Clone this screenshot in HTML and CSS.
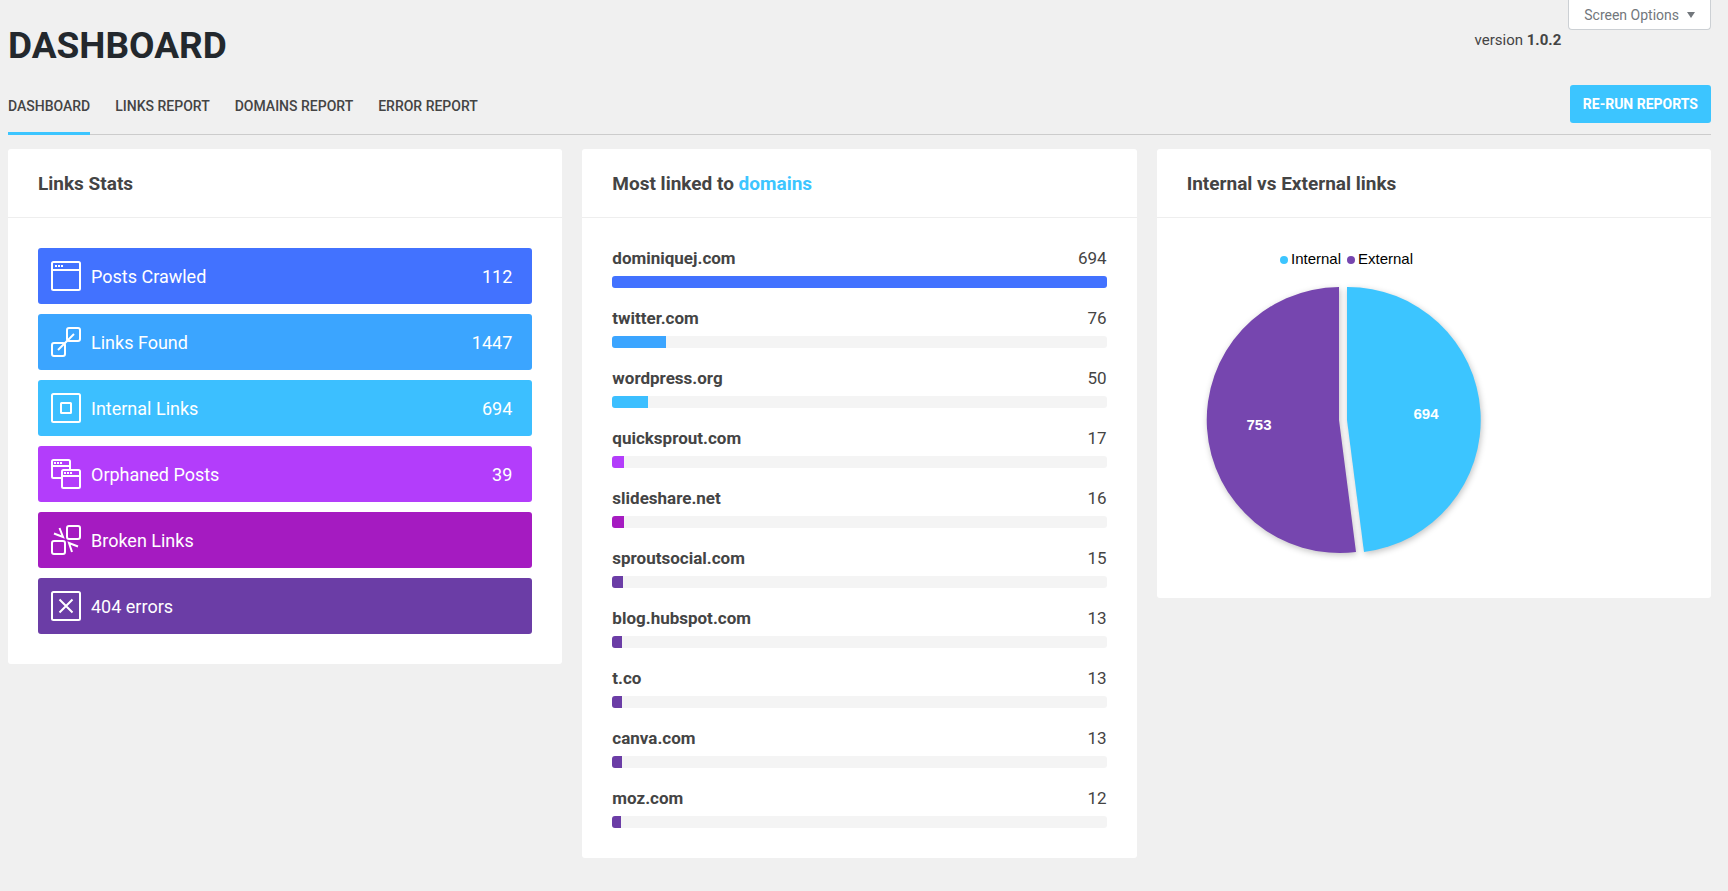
FILE: index.html
```html
<!DOCTYPE html>
<html lang="en">
<head>
<meta charset="utf-8">
<title>Dashboard</title>
<link rel="stylesheet" href="styles.css">
</head>
<body>
<header class="topbar">
  <h1 class="page-title">DASHBOARD</h1>
  <div class="topbar-side">
    <p class="version">version <strong>1.0.2</strong></p>
    <button class="screen-options" type="button">Screen Options
      <svg class="caret" viewBox="0 0 8 6" aria-hidden="true"><path d="M0 0h8L4 6z"/></svg>
    </button>
  </div>
</header>
<div class="navbar">
  <nav class="tabs">
    <a class="tab tab-active" href="#dashboard">DASHBOARD</a>
    <a class="tab" href="#links">LINKS REPORT</a>
    <a class="tab" href="#domains">DOMAINS REPORT</a>
    <a class="tab" href="#errors">ERROR REPORT</a>
  </nav>
  <button class="run-button" type="button">RE-RUN REPORTS</button>
</div>
<main class="cards">
  <section class="card">
    <h2 class="card-title">Links Stats</h2>
    <ul class="card-body stats">
      <li class="stat blue">
        <svg class="icon" viewBox="0 0 30 30" aria-hidden="true"><rect x="1" y="1" width="28" height="28" rx="1.5"/><path d="M1 9h28"/><path class="dots" d="M4 4h2v2H4zM7 4h2v2H7zM10 4h2v2h-2z"/></svg>
        <span class="stat-name">Posts Crawled</span><span class="stat-value">112</span>
      </li>
      <li class="stat sky">
        <svg class="icon" viewBox="0 0 30 30" aria-hidden="true"><rect x="1" y="16" width="13" height="13" rx="2"/><rect x="16" y="1" width="13" height="13" rx="2"/><path d="M7 23 23 7"/></svg>
        <span class="stat-name">Links Found</span><span class="stat-value">1447</span>
      </li>
      <li class="stat cyan">
        <svg class="icon" viewBox="0 0 30 30" aria-hidden="true"><rect x="1" y="1" width="28" height="28" rx="1.5"/><rect x="10" y="10" width="10" height="10" rx=".5"/></svg>
        <span class="stat-name">Internal Links</span><span class="stat-value">694</span>
      </li>
      <li class="stat orchid">
        <svg class="icon" viewBox="0 0 30 30" aria-hidden="true"><path d="M10 19H2.500Q1 19 1 17.500V2.500Q1 1 2.500 1H17.500Q19 1 19 2.500V10M1 7H19"/><rect x="11" y="11" width="18" height="18" rx="1.500"/><path d="M11 17h18"/><path class="dots" d="M3 3h2v2H3zM6 3h2v2H6zM9 3h2v2H9zM13 13h2v2h-2zM16 13h2v2h-2zM19 13h2v2h-2z"/></svg>
        <span class="stat-name">Orphaned Posts</span><span class="stat-value">39</span>
      </li>
      <li class="stat magenta">
        <svg class="icon" viewBox="0 0 30 30" aria-hidden="true"><rect x="1" y="16" width="13" height="13" rx="2"/><rect x="16" y="1" width="13" height="13" rx="2"/><path d="M8.500 3 12 12 3 8.500M21 27 18 18 27 21.500"/></svg>
        <span class="stat-name">Broken Links</span><span class="stat-value"></span>
      </li>
      <li class="stat violet">
        <svg class="icon" viewBox="0 0 30 30" aria-hidden="true"><rect x="1" y="1" width="28" height="28" rx="1.5"/><path d="M8.500 8.500l13 13M21.500 8.500l-13 13"/></svg>
        <span class="stat-name">404 errors</span><span class="stat-value"></span>
      </li>
    </ul>
  </section>

  <section class="card">
    <h2 class="card-title">Most linked to <span class="accent">domains</span></h2>
    <ul class="card-body domains">
      <li class="domain"><strong>dominiquej.com</strong><span>694</span><div class="track"><div class="fill blue" style="width:100%"></div></div></li>
      <li class="domain"><strong>twitter.com</strong><span>76</span><div class="track"><div class="fill sky" style="width:10.95%"></div></div></li>
      <li class="domain"><strong>wordpress.org</strong><span>50</span><div class="track"><div class="fill cyan" style="width:7.2%"></div></div></li>
      <li class="domain"><strong>quicksprout.com</strong><span>17</span><div class="track"><div class="fill orchid" style="width:2.45%"></div></div></li>
      <li class="domain"><strong>slideshare.net</strong><span>16</span><div class="track"><div class="fill magenta" style="width:2.31%"></div></div></li>
      <li class="domain"><strong>sproutsocial.com</strong><span>15</span><div class="track"><div class="fill violet" style="width:2.16%"></div></div></li>
      <li class="domain"><strong>blog.hubspot.com</strong><span>13</span><div class="track"><div class="fill violet" style="width:1.87%"></div></div></li>
      <li class="domain"><strong>t.co</strong><span>13</span><div class="track"><div class="fill violet" style="width:1.87%"></div></div></li>
      <li class="domain"><strong>canva.com</strong><span>13</span><div class="track"><div class="fill violet" style="width:1.87%"></div></div></li>
      <li class="domain"><strong>moz.com</strong><span>12</span><div class="track"><div class="fill violet" style="width:1.73%"></div></div></li>
    </ul>
  </section>

  <section class="card">
    <h2 class="card-title">Internal vs External links</h2>
    <div class="card-body">
      <svg class="pie" viewBox="0 0 320 320" role="img" aria-label="Internal 694, External 753">
        <circle class="internal" cx="97" cy="12" r="4"/>
        <text class="legend" x="104" y="16">Internal</text>
        <circle class="external" cx="164" cy="12" r="4"/>
        <text class="legend" x="171" y="16">External</text>
        <g class="slices">
          <path class="external" d="M152 172V39A133 133 0 1 0 169 304Z"/>
          <path class="internal" d="M160 172V39A133 133 0 0 1 177 304Z"/>
        </g>
        <text class="slice-label" x="239" y="171">694</text>
        <text class="slice-label" x="72" y="182">753</text>
      </svg>
    </div>
  </section>
</main>
</body>
</html>
```
FILE: styles.css
```css
* { box-sizing: border-box; }

body {
  margin: 0;
  padding: 0 17px 32px 8px;
  background: #f0f0f0;
  color: #444;
  font-family: Roboto, "Liberation Sans", sans-serif;
}

h1, h2, p, ul { margin: 0; padding: 0; }
ul { list-style: none; }
button { font-family: inherit; cursor: pointer; }

.topbar {
  display: flex;
  justify-content: space-between;
  padding-bottom: 15px;
}
.page-title {
  padding-top: 22px;
  color: #23282d;
  font-size: 37px;
  font-weight: 700;
  line-height: 48px;
}
.topbar-side {
  display: flex;
  align-items: flex-start;
  gap: 7px;
}
.version {
  padding-top: 30px;
  font-size: 15px;
  line-height: 20px;
}
.version strong { font-weight: 700; }
.screen-options {
  display: flex;
  align-items: center;
  gap: 8px;
  height: 30px;
  padding: 0 15px;
  border: 1px solid #ccd0d4;
  border-top: 0;
  border-radius: 0 0 4px 4px;
  background: #fff;
  color: #72777c;
  font-size: 14px;
}
.caret { width: 8px; height: 6px; fill: #72777c; }

.navbar {
  display: flex;
  justify-content: space-between;
  border-bottom: 1px solid #ccc;
}
.tabs { display: flex; gap: 25px; margin-bottom: -1px; }
.tab {
  padding: 11px 0 16px;
  border-bottom: 3px solid transparent;
  color: #444;
  font-size: 14px;
  font-weight: 500;
  line-height: 20px;
  text-decoration: none;
}
.tab-active { border-color: #3cc5ff; }
.run-button {
  height: 38px;
  margin-bottom: 11px;
  padding: 0 13px;
  border: 0;
  border-radius: 3px;
  background: #3cc5ff;
  color: #fff;
  font-size: 14px;
  font-weight: 700;
}

.cards {
  display: grid;
  grid-template-columns: repeat(3, minmax(0, 1fr));
  align-items: start;
  gap: 20px;
  margin-top: 14px;
}
.card { border-radius: 3px; background: #fff; }
.card-title {
  padding: 25px 30px 23px;
  border-bottom: 1px solid #eee;
  font-size: 19px;
  font-weight: 700;
  line-height: 20px;
}
.accent { color: #3cc5ff; }
.card-body { padding: 30px; }

.stats { display: grid; gap: 10px; }
.stat {
  display: flex;
  align-items: center;
  gap: 10px;
  height: 56px;
  padding: 0 20px 0 13px;
  border-radius: 3px;
  color: #fff;
  font-size: 18px;
}
.stat-value { margin-left: auto; }
.icon {
  width: 30px;
  height: 30px;
  fill: none;
  stroke: #fff;
  stroke-width: 2;
}
.dots { fill: #fff; stroke: none; }

.blue { background: #4272ff; }
.sky { background: #3ba5ff; }
.cyan { background: #3cbfff; }
.orchid { background: #b33dfb; }
.magenta { background: #a51bc1; }
.violet { background: #6b3da6; }

.domains { display: grid; gap: 20px; }
.domain {
  display: flex;
  flex-wrap: wrap;
  justify-content: space-between;
  row-gap: 8px;
  font-size: 17px;
  line-height: 20px;
}
.domain strong { font-weight: 700; }
.track {
  flex: 0 0 100%;
  height: 12px;
  overflow: hidden;
  border-radius: 3px;
  background: #f4f4f4;
}
.fill { height: 100%; }

.pie {
  display: block;
  width: 320px;
  max-width: 100%;
  font-family: "Liberation Sans", Arial, sans-serif;
  font-size: 15px;
}
.legend { fill: #000; }
.slice-label { fill: #fff; font-weight: 700; text-anchor: middle; }
.slices path { filter: drop-shadow(1px 2px 3px rgba(0, 0, 0, .24)); }
.internal { fill: #3cc5ff; }
.external { fill: #7646af; }
```
